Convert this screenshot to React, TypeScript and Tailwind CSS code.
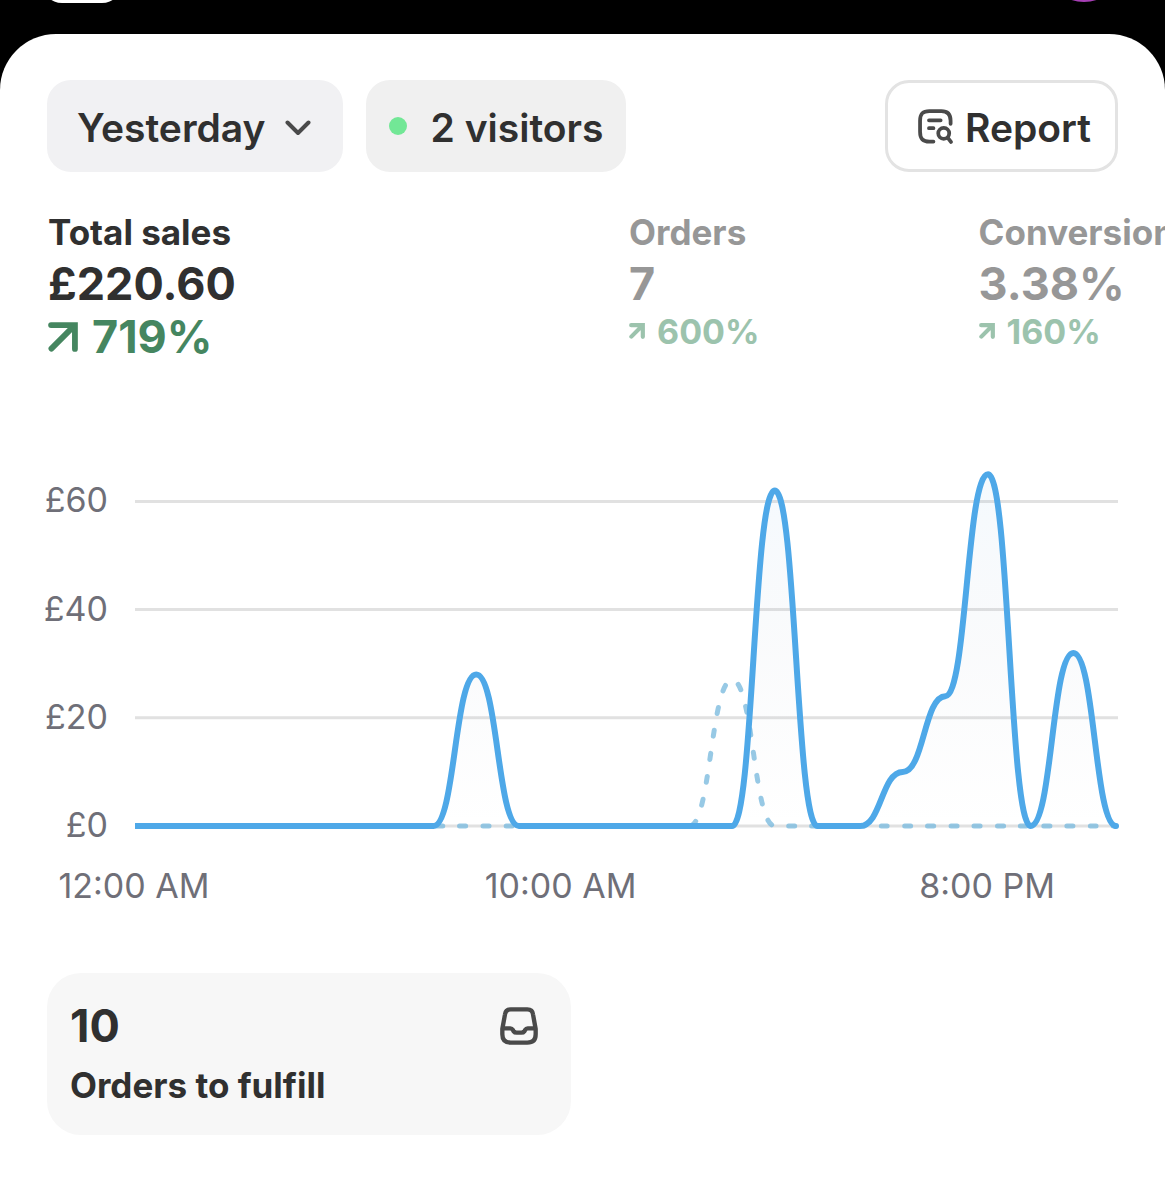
import React from 'react';

type Stat = { label: string; value: string; change: string; active?: boolean; width: string };

const stats: Stat[] = [
  { label: 'Total sales', value: '£220.60', change: '719%', active: true, width: 'w-[54%] pl-12' },
  { label: 'Orders', value: '7', change: '600%', width: 'w-[30%]' },
  { label: 'Conversion', value: '3.38%', change: '160%', width: 'w-[30%]' },
];

const sales = [0, 0, 0, 0, 0, 0, 0, 0, 28, 0, 0, 0, 0, 0, 0, 62, 0, 0, 10, 24, 65, 0, 32, 0];
const previous = sales.map((_, hour) => (hour === 14 ? 27 : 0));

const LEFT = 135;
const RIGHT = 1116;
const BASE = 375;
const hourX = (hour: number) => LEFT + ((RIGHT - LEFT) * hour) / 23;
const valueY = (value: number) => BASE - value * 5.41;

function curve(values: number[]) {
  return values
    .map((value, hour) => {
      const x = hourX(hour);
      const y = valueY(value);
      if (hour === 0) return `M${x} ${y}`;
      const mid = (hourX(hour - 1) + x) / 2;
      return `C${mid} ${valueY(values[hour - 1])} ${mid} ${y} ${x} ${y}`;
    })
    .join('');
}

function TrendArrow({ active }: { active?: boolean }) {
  return (
    <svg viewBox="0 0 88 88" aria-hidden="true" fill="none" stroke="currentColor" strokeLinecap="round" className={active ? 'size-[30px]' : '-mt-0.5 size-4'}>
      <path d={active ? 'M9 9H79V79M78 10L10 78' : 'M12 12H76V76M74 14L13 75'} strokeWidth={active ? 17 : 23} />
    </svg>
  );
}

function ReportIcon() {
  return (
    <svg viewBox="0 0 102 102" aria-hidden="true" fill="none" stroke="#4a4a4a" strokeWidth="11" strokeLinecap="round" className="size-[35px]">
      <path d="M95 43V34C95 14 86 6 68 6H33C14 6 6 14 6 34V66C6 87 14 95 33 95H45" />
      <path d="M32 33H66M32 56H45" />
      <circle cx="75" cy="71" r="16" />
      <path d="M87 84L96 96" />
    </svg>
  );
}

function InboxIcon() {
  return (
    <svg viewBox="0 0 114 114" aria-hidden="true" fill="none" stroke="#4a4a4a" strokeWidth="13" strokeLinejoin="round" className="size-[38px]">
      <path d="M32 7H82C93 7 98 12 99 22L107 66V82C107 99 99 107 82 107H32C15 107 7 99 7 82V66L15 22C16 12 21 7 32 7Z" />
      <path d="M7 64H31Q36 64 38 68L41 73Q44 77 50 77H64Q70 77 73 73L76 68Q78 64 83 64H107" />
    </svg>
  );
}

function SalesChart() {
  return (
    <svg viewBox="0 0 1165 460" role="img" aria-label="Total sales by hour" className="block h-auto w-full">
      <defs>
        <linearGradient id="area" gradientUnits="userSpaceOnUse" x1="0" y1="24" x2="0" y2="375">
          <stop offset="0" stopColor="#4ea8e8" stopOpacity="0.06" />
          <stop offset="0.5" stopColor="#8090b0" stopOpacity="0.04" />
          <stop offset="1" stopColor="#8090b0" stopOpacity="0" />
        </linearGradient>
      </defs>
      {[60, 40, 20, 0].map((tick) => (
        <g key={tick}>
          <line x1={LEFT} x2="1118" y1={valueY(tick)} y2={valueY(tick)} stroke="#e1e1e1" strokeWidth="3" />
          <text x="108" y={valueY(tick) + 11} textAnchor="end" fill="#6f6f78" className="text-[34px]">
            £{tick}
          </text>
        </g>
      ))}
      <path d={curve(previous)} fill="none" stroke="#7dbbdf" strokeOpacity="0.8" strokeWidth="5" strokeLinecap="round" strokeDasharray="6 17.2" />
      <path d={curve(sales)} fill="url(#area)" />
      <rect x="128" y="368" width="7" height="14" fill="#fff" />
      <path d={curve(sales)} fill="none" stroke="#4ea8e8" strokeWidth="6" strokeLinejoin="round" />
      <circle cx={RIGHT} cy={BASE} r="3" fill="#4ea8e8" />
      {[
        { hour: 0, label: '12:00 AM' },
        { hour: 10, label: '10:00 AM' },
        { hour: 20, label: '8:00 PM' },
      ].map(({ hour, label }) => (
        <text key={hour} x={hourX(hour) - 1} y="447" textAnchor="middle" fill="#6f6f78" className="text-[34px]">
          {label}
        </text>
      ))}
    </svg>
  );
}

export default function App() {
  return (
    <div className="min-h-screen overflow-hidden bg-black font-['Inter',sans-serif] text-[#303030]">
      <header className="flex h-[34px] items-start justify-between overflow-hidden pr-[41px] pl-[42px]">
        <div className="-mt-10 h-[43px] w-20 rounded-[20px] bg-white" />
        <div className="-mt-[78px] size-20 rounded-full bg-[#a63fb5]" />
      </header>
      <main className="min-h-[calc(100vh-34px)] rounded-t-[56px] bg-white pt-[46px]">
        <div className="flex items-center gap-[23px] px-[47px] text-[39px] font-semibold">
          <button className="flex h-[92px] items-center gap-[19px] rounded-3xl bg-[#f1f1f3] pr-8 pl-[30px]">
            <span className="pt-1">Yesterday</span>
            <svg viewBox="0 0 26 16" aria-hidden="true" fill="none" stroke="#4a4a4a" strokeWidth="4" strokeLinecap="round" strokeLinejoin="round" className="mt-1 h-4 w-[26px]">
              <path d="M2.500 2.500L13 13L23.500 2.500" />
            </svg>
          </button>
          <button className="flex h-[92px] items-center gap-6 rounded-3xl bg-[#f0f0f0] px-[23px]">
            <span className="size-[18px] rounded-full bg-[#72e796]" />
            <span className="pt-1">2 visitors</span>
          </button>
          <button className="ml-auto flex h-[92px] items-center gap-3 rounded-3xl border-3 border-[#e3e3e3] pr-6 pl-[30px]">
            <ReportIcon />
            <span className="pt-1">Report</span>
          </button>
        </div>

        <section className="flex overflow-hidden pt-[34px] font-bold">
          {stats.map((stat) => (
            <div key={stat.label} className={`shrink-0 whitespace-nowrap ${stat.width} ${stat.active ? '' : 'text-[#979797]'}`}>
              <h2 className="text-[35px] leading-[52px]">{stat.label}</h2>
              <p className="text-[45px] leading-[52px]">{stat.value}</p>
              <p className={stat.active ? 'flex items-center gap-[14px] text-[45px] leading-[54px] text-[#458660]' : 'flex items-center gap-3 text-[34px] leading-11 text-[#9cc3ad]'}>
                <TrendArrow active={stat.active} />
                {stat.change}
              </p>
            </div>
          ))}
        </section>

        <section className="pt-[87px]">
          <SalesChart />
        </section>

        <section className="grid grid-cols-2 gap-6 px-[47px] pt-[62px] pb-16">
          <a href="#orders" className="block rounded-[34px] bg-[#f7f7f7] pt-[23px] pr-[33px] pb-5 pl-[23px] font-bold">
            <div className="flex items-center justify-between text-[45px] leading-[60px]">
              10
              <InboxIcon />
            </div>
            <div className="text-[35px] leading-[59px]">Orders to fulfill</div>
          </a>
        </section>
      </main>
    </div>
  );
}
